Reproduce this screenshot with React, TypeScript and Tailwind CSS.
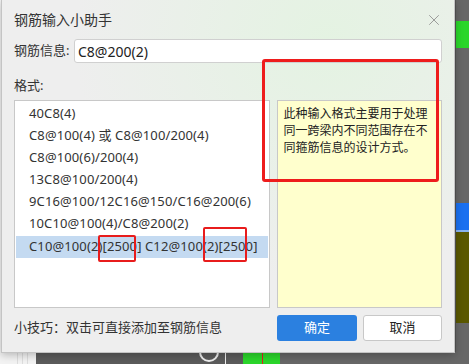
import { X } from "lucide-react";

const formats = [
  "40C8(4)",
  "C8@100(4) 或 C8@100/200(4)",
  "C8@100(6)/200(4)",
  "13C8@100/200(4)",
  "9C16@100/12C16@150/C16@200(6)",
  "10C10@100(4)/C8@200(2)",
  "C10@100(2)[2500] C12@100(2)[2500]",
];

const font = "font-['Noto_Sans','Noto_Sans_CJK_SC',sans-serif]";

function Backdrop() {
  // the app window that sits behind the dialog
  return (
    <div className="flex h-full w-full flex-col bg-[#676767]">
      <div className="flex h-[352px]">
        <div className="w-[454px] bg-[#f4f4f4]" />
        <div className="w-[2px] bg-[#555555]" />
        <div className="flex flex-1 flex-col">
          <div className="h-[21px]" />
          <div className="h-[27px] bg-[#2bd62b]" />
          <div className="h-[155px]" />
          <div className="h-[29px] border-b-2 border-[#8ab4f0] bg-[#1a70f0]" />
          <div className="h-[91px] bg-[#5a5800]" />
        </div>
      </div>
      <div className="flex h-[12px]">
        <div className="flex w-[36px] gap-[4px] bg-[#f3f3f3] pl-[17px]">
          <div className="w-px bg-[#dddddd]" />
          <div className="w-px bg-[#dddddd]" />
          <div className="w-px bg-[#dddddd]" />
        </div>
        <div className="flex w-[207px] bg-[#5b5b5b] pl-[163px]">
          <div className="h-[20px] w-[20px] -translate-y-[10px] rounded-full border-2 border-[#eeeeee]" />
          <div className="ml-[6px] w-px bg-[#eeeeee]" />
        </div>
        <div className="flex w-[37px] bg-[#2bd62b] pl-[19px]">
          <div className="w-px bg-[#e02020]" />
        </div>
        <div className="flex-1 bg-[#676767]" />
      </div>
    </div>
  );
}

export default function App() {
  return (
    <div className={`relative h-[364px] w-[469px] overflow-hidden ${font}`}>
      <Backdrop />

      <div className="absolute left-[1px] top-0 flex h-[353px] w-[454px] flex-col border border-t-0 border-[#c4c4c4] bg-[radial-gradient(ellipse_at_72%_12%,#e4f3e2_0%,#eeeeee_55%)] px-[12px] text-[#333333] shadow-[0_2px_8px_rgba(0,0,0,0.25)]">
        <div className="flex h-[39px] items-center justify-between">
          <span className="text-[14px]">钢筋输入小助手</span>
          <X className="mr-[-1px] h-[18px] w-[18px] text-[#8a8a8a]" strokeWidth={1.1} />
        </div>

        <div className="flex h-[24px] items-center">
          <span className="w-[60px] text-[13px]">钢筋信息:</span>
          <div className="flex h-[24px] flex-1 items-center rounded-[3px] border border-[#d0d0d0] bg-white pl-[3px] text-[14px] text-[#222222]">
            C8@200(2)
          </div>
        </div>

        <div className="mt-[13px] flex h-[20px] items-center text-[13px]">格式:</div>

        <div className="mt-[4px] flex h-[208px] gap-[7px]">
          <div className="flex w-[257px] flex-col border border-[#c8c8c8] bg-white px-px pt-[2px]">
            {formats.map((f, i) => (
              <div
                key={f}
                className={`flex h-[22px] items-center whitespace-nowrap pl-[13px] text-[13px] tracking-[0.12px] ${
                  i === formats.length - 1 ? "mt-[1px] h-[20px] bg-[#c4daf1]" : ""
                }`}
              >
                {f}
              </div>
            ))}
          </div>
          <div className="w-[165px] border border-[#c8c8c8] bg-[#ffffcd] px-[5px] pt-[4px] text-[12px] leading-[17px] text-[#222222]">
            此种输入格式主要用于处理同一跨梁内不同范围存在不同箍筋信息的设计方式。
          </div>
        </div>

        <div className="mt-[7px] flex h-[26px] items-center justify-between">
          <span className="text-[13px]">小技巧：双击可直接添加至钢筋信息</span>
          <div className="flex gap-[6px]">
            <button className="h-[26px] w-[80px] rounded-[3px] bg-[#2b80e0] text-[13px] text-white">
              确定
            </button>
            <button className="h-[26px] w-[79px] rounded-[3px] border border-[#c8c8c8] bg-white text-[13px] text-[#222222]">
              取消
            </button>
          </div>
        </div>
      </div>

      {/* red annotation boxes */}
      <div className="absolute left-[262px] top-[59px] h-[123px] w-[177px] rounded-[3px] border-[3px] border-[#ee1c1c]" />
      <div className="absolute left-[98px] top-[235px] h-[27px] w-[38px] rounded-[2px] border-2 border-[#e81c1c]" />
      <div className="absolute left-[203px] top-[227px] h-[35px] w-[44px] rounded-[2px] border-2 border-[#e81c1c]" />
    </div>
  );
}
